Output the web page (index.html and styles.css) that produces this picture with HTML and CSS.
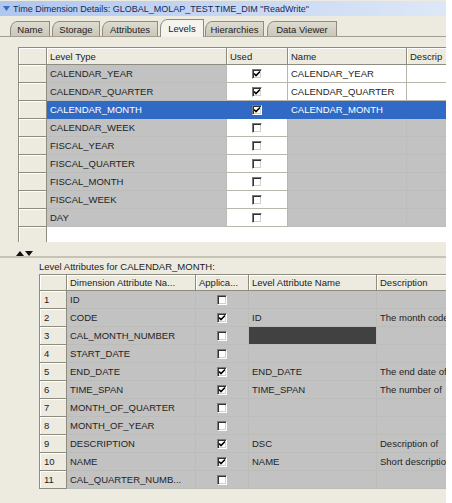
FILE: index.html
```html
<!DOCTYPE html>
<html>
<head>
<meta charset="utf-8">
<link rel="stylesheet" href="styles.css">
</head>
<body>
<div class="app">
  <div class="titlebar">
    <svg class="tri" width="7" height="5" viewBox="0 0 7 5"><polygon points="0,0 7,0 3.5,5" fill="#3D6CC0"/></svg>
    <span>Time Dimension Details: GLOBAL_MOLAP_TEST.TIME_DIM "ReadWrite"</span>
  </div>
  <div class="tabs">
    <div class="tab t-name">Name</div>
    <div class="tab t-storage">Storage</div>
    <div class="tab t-attr">Attributes</div>
    <div class="tab t-levels active">Levels</div>
    <div class="tab t-hier">Hierarchies</div>
    <div class="tab t-dv">Data Viewer</div>
  </div>
  <div class="panel">
    <div class="grid top">
      <div class="rh"></div><div class="c hd">Level Type</div><div class="c hd">Used</div><div class="c hd">Name</div><div class="c hd">Descrip</div>

      <div class="rh"></div><div class="c g">CALENDAR_YEAR</div><div class="c w ctr"><span class="cb on"></span></div><div class="c w">CALENDAR_YEAR</div><div class="c w"></div>
      <div class="rh"></div><div class="c g">CALENDAR_QUARTER</div><div class="c w ctr"><span class="cb on"></span></div><div class="c w">CALENDAR_QUARTER</div><div class="c w"></div>
      <div class="rh"></div><div class="c sel">CALENDAR_MONTH</div><div class="c sel ctr"><span class="cb on"></span></div><div class="c sel">CALENDAR_MONTH</div><div class="c sel"></div>
      <div class="rh"></div><div class="c g">CALENDAR_WEEK</div><div class="c w ctr"><span class="cb"></span></div><div class="c g"></div><div class="c g"></div>
      <div class="rh"></div><div class="c g">FISCAL_YEAR</div><div class="c w ctr"><span class="cb"></span></div><div class="c g"></div><div class="c g"></div>
      <div class="rh"></div><div class="c g">FISCAL_QUARTER</div><div class="c w ctr"><span class="cb"></span></div><div class="c g"></div><div class="c g"></div>
      <div class="rh"></div><div class="c g">FISCAL_MONTH</div><div class="c w ctr"><span class="cb"></span></div><div class="c g"></div><div class="c g"></div>
      <div class="rh"></div><div class="c g">FISCAL_WEEK</div><div class="c w ctr"><span class="cb"></span></div><div class="c g"></div><div class="c g"></div>
      <div class="rh"></div><div class="c g">DAY</div><div class="c w ctr"><span class="cb"></span></div><div class="c g"></div><div class="c g"></div>
      <div class="rh filler"></div>
    </div>

    <div class="split">
      <svg width="18" height="5" viewBox="0 0 18 5"><polygon points="0,5 4,0 8,5" fill="#111"/><polygon points="9,0 17,0 13,5" fill="#111"/></svg>
    </div>
    <div class="label">Level Attributes for CALENDAR_MONTH:</div>

    <div class="grid bottom">
      <div class="rh"></div><div class="c hd">Dimension Attribute Na...</div><div class="c hd">Applica...</div><div class="c hd">Level Attribute Name</div><div class="c hd">Description</div>

      <div class="rh num">1</div><div class="c g">ID</div><div class="c g ctr"><span class="cb"></span></div><div class="c g"></div><div class="c g"></div>
      <div class="rh num">2</div><div class="c g">CODE</div><div class="c g ctr"><span class="cb on"></span></div><div class="c g">ID</div><div class="c g">The month code</div>
      <div class="rh num">3</div><div class="c g">CAL_MONTH_NUMBER</div><div class="c g ctr"><span class="cb"></span></div><div class="c dk"></div><div class="c g"></div>
      <div class="rh num">4</div><div class="c g">START_DATE</div><div class="c g ctr"><span class="cb"></span></div><div class="c g"></div><div class="c g"></div>
      <div class="rh num">5</div><div class="c g">END_DATE</div><div class="c g ctr"><span class="cb on"></span></div><div class="c g">END_DATE</div><div class="c g">The end date of</div>
      <div class="rh num">6</div><div class="c g">TIME_SPAN</div><div class="c g ctr"><span class="cb on"></span></div><div class="c g">TIME_SPAN</div><div class="c g">The number of</div>
      <div class="rh num">7</div><div class="c g">MONTH_OF_QUARTER</div><div class="c g ctr"><span class="cb"></span></div><div class="c g"></div><div class="c g"></div>
      <div class="rh num">8</div><div class="c g">MONTH_OF_YEAR</div><div class="c g ctr"><span class="cb"></span></div><div class="c g"></div><div class="c g"></div>
      <div class="rh num">9</div><div class="c g">DESCRIPTION</div><div class="c g ctr"><span class="cb on"></span></div><div class="c g">DSC</div><div class="c g">Description of</div>
      <div class="rh num">10</div><div class="c g">NAME</div><div class="c g ctr"><span class="cb on"></span></div><div class="c g">NAME</div><div class="c g">Short description</div>
      <div class="rh num">11</div><div class="c g">CAL_QUARTER_NUMB...</div><div class="c g ctr"><span class="cb"></span></div><div class="c g"></div><div class="c g"></div>
    </div>
  </div>
</div>
</body>
</html>
```
FILE: styles.css
```css
* { box-sizing: border-box; }
body {
  margin: 0;
  background: #fff;
  font-family: "Liberation Sans", Arial, sans-serif;
  font-size: 9.5px;
  color: #222;
}
.app {
  width: 446px;
  height: 503px;
  background: #EDEADF;
  overflow: hidden;
}
.titlebar {
  margin-top: 1px;
  height: 15px;
  background: linear-gradient(to right, #AFC7EE, #DDE7F7);
  color: #16295A;
  display: flex;
  align-items: center;
  padding-left: 3px;
  white-space: nowrap;
  font-size: 9px;
}
.tri { margin-right: 3px; }
.tabs {
  height: 21px;
  display: flex;
  align-items: flex-end;
  padding-left: 10px;
  gap: 2px;
  border-bottom: 1px solid #A29E90;
}
.tab {
  height: 15px;
  display: flex;
  align-items: center;
  justify-content: center;
  background: linear-gradient(#DEDBCF, #CBC7BA);
  border: 1px solid #8E8B7F;
  border-bottom: none;
  border-top-left-radius: 7px 9px;
  color: #222;
  white-space: nowrap;
}
.tab.active {
  height: 18px;
  margin-bottom: -1px;
  background: #F4F3EE;
}
.t-name { width: 40px; }
.t-storage { width: 48px; }
.t-attr { width: 56px; }
.t-levels { width: 44px; }
.t-hier { width: 59px; margin-left: -1px; }
.t-dv { width: 70px; margin-left: 1px; }
.panel {
  padding-top: 10px;
  overflow: hidden;
}
.grid {
  display: grid;
  border-top: 1px solid #8E8B80;
  border-left: 1px solid #8E8B80;
  width: max-content;
}
.top {
  margin-left: 18px;
  grid-template-columns: 28px 180px 61px 119px 100px;
  grid-template-rows: 17px repeat(9, 18px) 15px;
  background: #fff;
  height: 195px;
}
.bottom {
  margin-left: 39px;
  grid-template-columns: 27px 129px 53px 128px 100px;
  grid-template-rows: 16px repeat(11, 18px);
}
.c {
  border-right: 1px solid #B7B7AE;
  border-bottom: 1px solid #B7B7AE;
  padding-left: 3px;
  display: flex;
  align-items: center;
  white-space: nowrap;
  overflow: hidden;
}
.g { background: #C2C2C2; color: #1E1E1E; border-color: #BCBCB8; }
.w { background: #fff; color: #1E1E1E; }
.sel { background: #316AC5; color: #fff; border-color: #316AC5; }
.dk { background: #414141; border-color: #BCBCB8; }
.ctr { justify-content: center; padding-left: 0; }
.hd {
  background: #EDEADF;
  border-right: 1px solid #8E8B80;
  border-bottom: 1px solid #8E8B80;
  box-shadow: inset 1px 1px #fff;
  color: #222;
}
.rh {
  background: #EDEADF;
  border-right: 1px solid #8E8B80;
  border-bottom: 1px solid #8E8B80;
  box-shadow: inset 1px 1px #fff;
  display: flex;
  align-items: center;
  color: #222;
}
.num { padding-left: 4px; }
.filler { border-bottom: none; }
.cb {
  width: 10px;
  height: 10px;
  background: #fff;
  border: 1px solid;
  border-color: #7A7A7A #FFFFFF #FFFFFF #7A7A7A;
  box-shadow: inset 1px 1px #333, inset -1px -1px #D4D0C8;
  display: block;
}
.cb.on {
  background: #fff url("data:image/svg+xml,%3Csvg xmlns='http://www.w3.org/2000/svg' width='8' height='8' viewBox='0 0 8 8'%3E%3Cpath d='M1 3.5 L3 5.5 L7 1.5' fill='none' stroke='%23000' stroke-width='1.6'/%3E%3C/svg%3E") center / 8px 8px no-repeat;
}
.split {
  height: 16px;
  padding-left: 16px;
  display: flex;
  align-items: flex-end;
  border-bottom: 2px solid #C8C4B5;
}
.split svg { display: block; }
.label {
  height: 16px;
  padding-left: 39px;
  display: flex;
  align-items: center;
  color: #222;
}
```
